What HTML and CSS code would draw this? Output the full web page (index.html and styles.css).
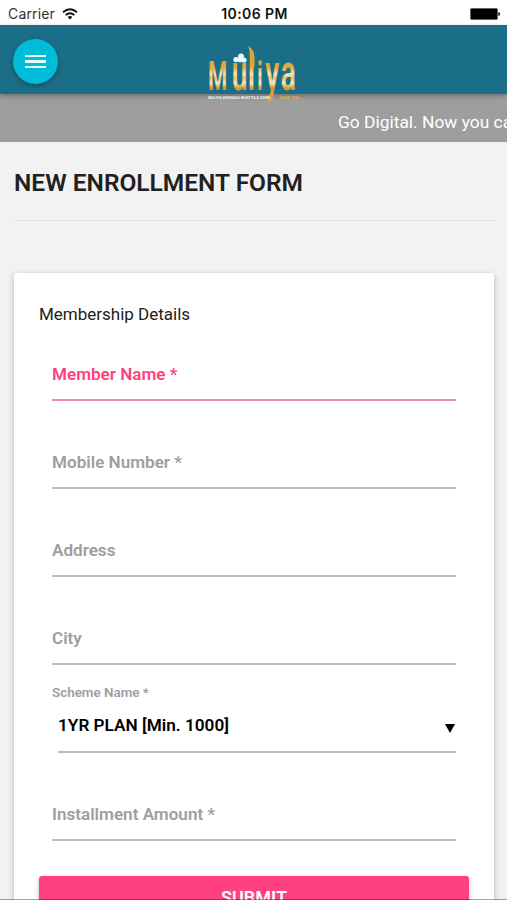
FILE: index.html
```html
<!DOCTYPE html>
<html lang="en">
<head>
    <meta charset="UTF-8">
    <meta name="viewport" content="width=device-width, initial-scale=1.0">
    <title>Muliya - New Enrollment</title>
    <link rel="stylesheet" href="styles.css">
</head>
<body>

<div class="status-bar">
    <div class="carrier">
        <span>Carrier</span>
        <svg width="16" height="12" viewBox="0 0 16 12" fill="none" stroke="#111" stroke-width="1.8">
            <path d="M1 4.3 Q8 -1.7 15 4.3"/>
            <path d="M3.6 7.1 Q8 3.3 12.4 7.1"/>
            <path d="M8 11.4 L5.6 9 Q8 7 10.4 9 Z" fill="#111" stroke="none"/>
        </svg>
    </div>
    <div class="clock">10:06 PM</div>
    <div class="battery">
        <svg width="31" height="12" viewBox="0 0 31 12">
            <rect x="0.5" y="0.5" width="27" height="11" rx="1" fill="#000" stroke="#555" stroke-width="0.6"/>
            <path d="M28.3 4 Q30.2 4.4 30.2 6 Q30.2 7.6 28.3 8 Z" fill="#111"/>
        </svg>
    </div>
</div>

<header class="header">
    <button class="menu-btn" aria-label="Menu">
        <span></span>
        <span></span>
        <span></span>
    </button>
    <svg class="logo" width="94" height="60" viewBox="0 0 94 60">
        <defs>
            <linearGradient id="gold" gradientUnits="userSpaceOnUse" x1="0" y1="8" x2="0" y2="58">
                <stop offset="0.1" stop-color="#dc9f2c"/>
                <stop offset="0.3" stop-color="#e5ad40"/>
                <stop offset="0.42" stop-color="#f8e6b8"/>
                <stop offset="0.5" stop-color="#e9c069"/>
                <stop offset="0.6" stop-color="#f8e9c4"/>
                <stop offset="0.7" stop-color="#d99a28"/>
                <stop offset="1" stop-color="#d9a53c"/>
            </linearGradient>
        </defs>
        <!-- narrow letters, the small ones as tall as the M -->
        <text class="logo-name" transform="scale(0.55 1)" y="45" fill="url(#gold)"><tspan class="cap" x="2">M</tspan><tspan x="45">u</tspan><tspan x="74">l</tspan><tspan class="cap" x="91">i</tspan><tspan x="106">y</tspan><tspan x="134">a</tspan></text>
        <!-- flame on the l -->
        <path d="M41 1 Q47 4 47.5 12 L47.500 22 L43 22 L43 12 Q43 5 41 1 Z" fill="#dda42f"/>
        <!-- flower above the u -->
        <g fill="#f4f8fb">
            <circle cx="29" cy="14.500" r="2.600"/>
            <circle cx="34" cy="11.500" r="3"/>
            <circle cx="37" cy="15" r="2.600"/>
            <circle cx="33" cy="15" r="2.400"/>
        </g>
        <text class="logo-tag" x="1" y="53.500" fill="#f2f2f2" textLength="62" lengthAdjust="spacingAndGlyphs">MULIYA KESHAVA BHATTA &amp; SONS</text>
        <text class="logo-tag" x="73" y="53.500" fill="#e0b050" textLength="19" lengthAdjust="spacingAndGlyphs">SINCE 1944</text>
    </svg>
</header>

<div class="ticker"><span>Go Digital. Now you ca</span></div>

<main>
    <h1>NEW ENROLLMENT FORM</h1>

    <div class="card">
        <form>
            <h2>Membership Details</h2>

            <div class="field active"><label>Member Name *</label></div>
            <div class="field"><label>Mobile Number *</label></div>
            <div class="field"><label>Address</label></div>
            <div class="field"><label>City</label></div>

            <div class="field select">
                <label>Scheme Name *</label>
                <div class="value">
                    <span>1YR PLAN [Min. 1000]</span>
                    <i class="arrow"></i>
                </div>
            </div>

            <div class="field"><label>Installment Amount *</label></div>

            <button type="button" class="submit">SUBMIT</button>
        </form>
    </div>
</main>

</body>
</html>
```

FILE: styles.css
```css
* {
    box-sizing: border-box;
}

body {
    margin: 0;
    height: 900px;
    overflow: hidden;
    background-color: #f2f2f2;
    color: #212121;
    font-family: Roboto, sans-serif;
}

/* thin dark edge at the bottom of the screen */
body::after {
    content: '';
    position: fixed;
    left: 0;
    right: 0;
    bottom: 0;
    height: 1px;
    background-color: rgba(0, 0, 0, 0.35);
}

/* status bar */
.status-bar {
    display: grid;
    grid-template-columns: 1fr auto 1fr;
    align-items: center;
    height: 25px;
    padding: 2px 6px 0 8px;
    background-color: #fff;
    color: #111;
    font-family: Inter, sans-serif;
    font-size: 14px;
}

.carrier {
    display: flex;
    align-items: center;
    gap: 7px;
}

.carrier span {
    color: #333;
    letter-spacing: 0.15px;
}

.clock {
    font-weight: 600;
    font-size: 14px;
    letter-spacing: 0.4px;
}

.battery {
    display: flex;
    justify-content: flex-end;
}

/* header */
.header {
    position: relative;
    z-index: 2;
    display: flex;
    align-items: flex-start;
    height: 69px;
    padding: 14px 13px 0;
    background-color: #1b6e88;
    box-shadow: 0 2px 5px rgba(0, 0, 0, 0.3);
}

.menu-btn {
    display: flex;
    flex-direction: column;
    align-items: center;
    justify-content: center;
    gap: 3px;
    width: 45px;
    height: 45px;
    padding: 0;
    border: none;
    border-radius: 50%;
    background-color: #00bcd8;
    box-shadow: 0 2px 5px rgba(0, 0, 0, 0.3);
}

.menu-btn span {
    width: 21px;
    height: 2.6px;
    background-color: #e4fafd;
}

/* hangs over the lower edge of the header */
.logo {
    position: absolute;
    top: 20px;
    left: 207px;
    overflow: visible;
}

.logo-name {
    font-size: 51px;
    font-weight: 600;
}

.logo-name .cap {
    font-size: 40px;
}

.logo-tag {
    font-size: 4px;
    font-weight: 700;
}

/* ticker */
.ticker {
    height: 48px;
    padding-left: 338px;
    background-color: #9e9e9e;
    color: #fff;
    font-size: 17.4px;
    line-height: 56px;
    white-space: nowrap;
    overflow: hidden;
}

/* content */
main {
    padding: 0 13px 0 14px;
}

h1 {
    height: 79px;
    margin: 0 0 52px;
    padding-top: 26px;
    border-bottom: 1px solid #e1e1e1;
    font-size: 24.5px;
    line-height: 30px;
    font-weight: 600;
}

.card {
    height: 627px;
    border-radius: 3px 3px 0 0;
    background-color: #fff;
    box-shadow: 0 2px 6px rgba(0, 0, 0, 0.26);
    overflow: hidden;
}

form {
    padding: 30px 25px 0;
}

h2 {
    margin: 0;
    font-size: 17px;
    line-height: 23px;
    font-weight: 400;
}

.field {
    height: 74px;
    margin: 0 13px 14px;
    padding-top: 37px;
    border-bottom: 2px solid #bdbdbd;
    color: #9e9e9e;
    font-size: 17.1px;
    line-height: 20px;
    font-weight: 600;
}

h2 + .field {
    margin-top: 1px;
}

.field label {
    display: block;
}

.field.active {
    border-color: #f08bb0;
    color: #ff4081;
}

.field.select {
    padding-top: 4px;
    border-bottom: none;
}

.select label {
    font-size: 13.4px;
}

.select .value {
    display: flex;
    align-items: center;
    justify-content: space-between;
    height: 50px;
    margin-left: 6px;
    padding-bottom: 5px;
    border-bottom: 2px solid #bdbdbd;
    color: #000;
    font-size: 17.2px;
}

.arrow {
    margin: 7px 1px 0 0;
    border: 5px solid transparent;
    border-top: 9px solid #000;
    border-bottom: none;
}

.submit {
    width: 100%;
    height: 42px;
    margin-top: 21px;
    padding: 0;
    border: none;
    border-radius: 3px;
    background-color: #ff4081;
    box-shadow: 0 2px 5px rgba(0, 0, 0, 0.26);
    color: #fff;
    font-family: Roboto, sans-serif;
    font-size: 18px;
    line-height: 41px;
    font-weight: 600;
}
```
